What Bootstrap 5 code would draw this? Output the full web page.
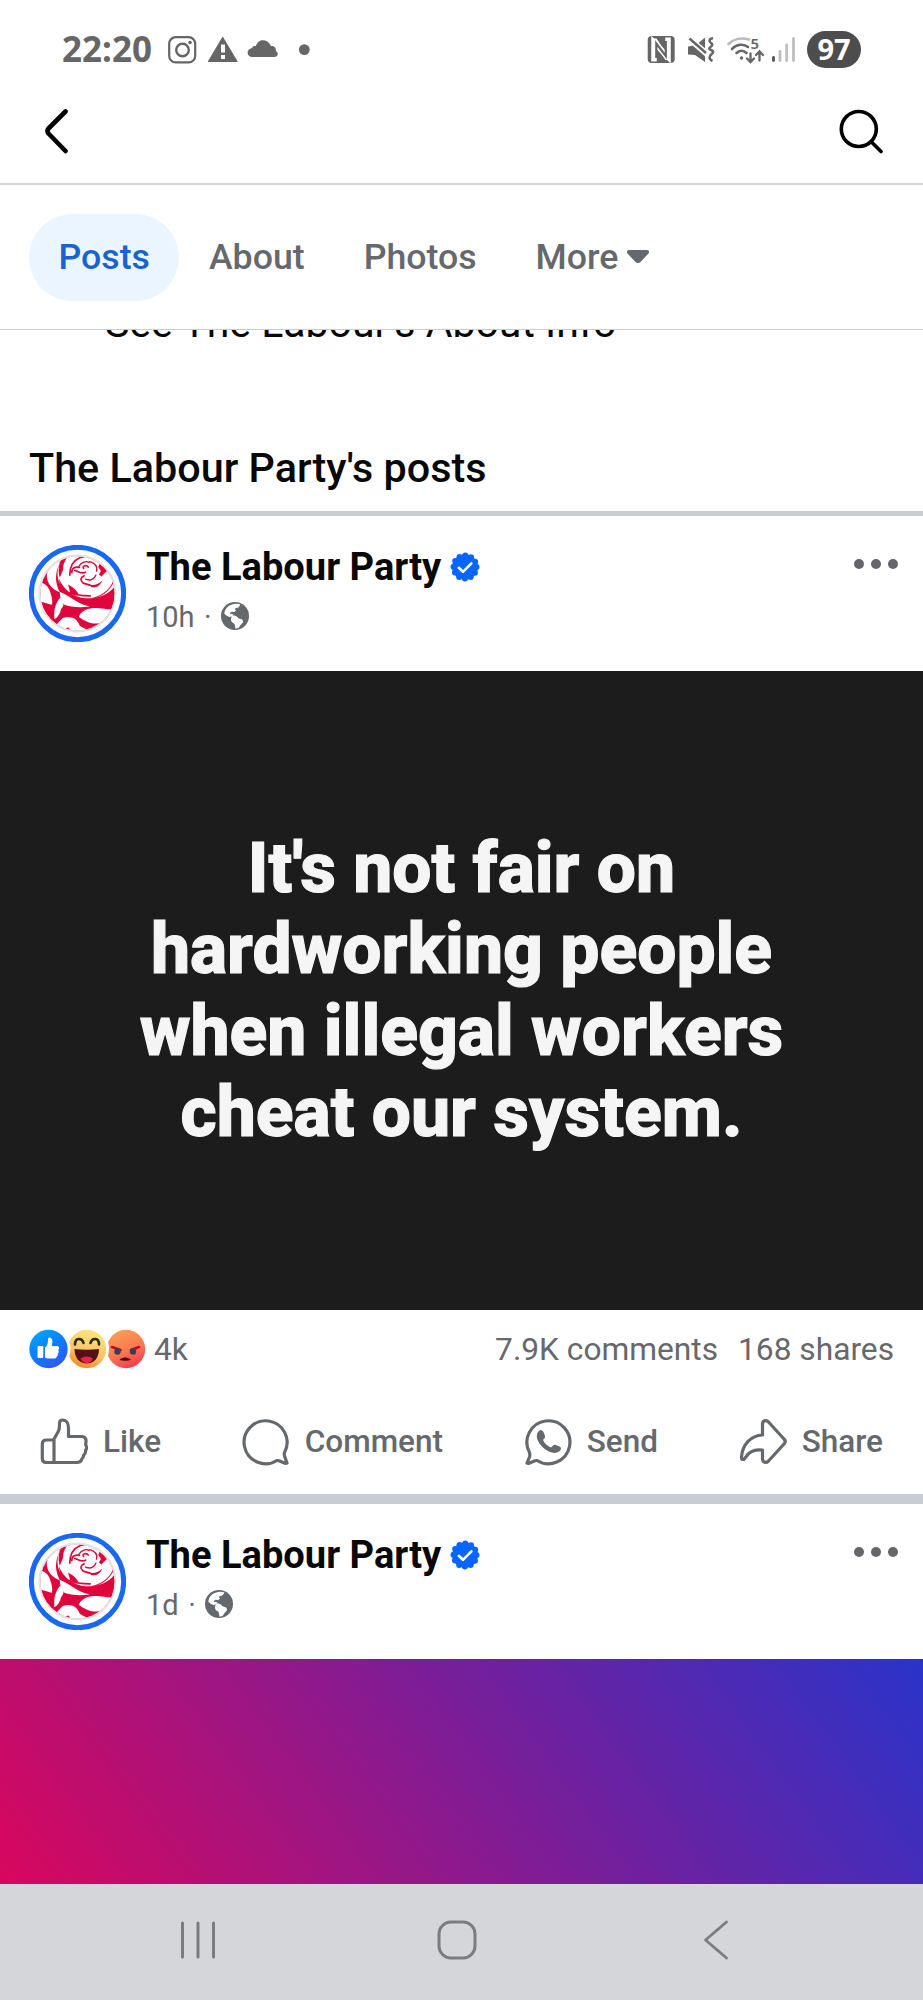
<!DOCTYPE html>
<html lang="en">

<head>
	<meta charset="utf-8">
	<meta name="viewport" content="width=device-width, initial-scale=1">
	<title>The Labour Party</title>
	<!-- Bootstrap CSS -->
	<link href="https://cdn.jsdelivr.net/npm/bootstrap@5.3.3/dist/css/bootstrap.min.css" rel="stylesheet">

	<style>
		body {
			font-family: Roboto, "Noto Sans", sans-serif;
			color: #080809;
			background-color: #fff;
			overflow: hidden;
		}

		svg {
			display: block;
			flex: none;
		}

		.screen {
			width: 923px;
			height: 2000px;
			white-space: nowrap;
		}

		/* Phone status bar */
		.status-bar {
			height: 79px;
			padding: 20px 62px 0 62px;
			font-family: "Noto Sans", sans-serif;
			color: #666;
		}

		.clock {
			font-size: 35px;
			font-weight: 700;
			line-height: 38px;
			width: 106px;
			height: 40px;
		}

		.battery {
			width: 54px;
			height: 37px;
			font-size: 29px;
			font-weight: 700;
			line-height: 36px;
			background-color: #4d4d4d;
		}

		/* Top bar and tabs */
		.top-bar {
			height: 106px;
			padding: 0 40px 0 44px;
			border-bottom: 2px solid #d4d4d4;
		}

		.tab-bar {
			height: 145px;
			padding-left: 29px;
			border-bottom: 1px solid #ccc;
		}

		.tab-bar .nav-link {
			height: 87px;
			padding: 0 29.5px;
			font-size: 35.7px;
			font-weight: 500;
			line-height: 87px;
			color: #65686c;
			border-radius: 44px;
		}

		.tab-bar .nav-link.active {
			color: #1763cf;
			background-color: #ebf5ff;
		}

		.about-peek {
			height: 95px;
			padding-left: 105px;
			font-size: 41px;
			line-height: 40px;
		}

		.about-peek div {
			margin-top: -27px;
		}

		.section-title {
			height: 86px;
			padding-left: 29px;
			font-size: 41.3px;
			font-weight: 500;
			line-height: 87px;
		}

		.divider {
			height: 5px;
			background-color: #c9ccd1;
		}

		.divider-lg {
			height: 10px;
			background-color: #c9ccd4;
		}

		/* Post */
		.post-head {
			height: 155px;
			padding: 29px 25px 0 29px;
		}

		.post-head .menu-dots {
			margin-top: 14px;
		}

		.page-name {
			font-size: 38.1px;
			font-weight: 700;
			line-height: 45px;
		}

		.page-name svg {
			margin-left: 9px;
			margin-top: -2px;
		}

		.post-meta {
			height: 54px;
			font-size: 29px;
			line-height: 54px;
			color: #65686c;
		}

		.post-meta span {
			padding: 0 9.500px;
		}

		.post-meta svg {
			margin-top: -2px;
		}

		.quote {
			height: 639px;
			font-size: 69.6px;
			font-weight: 800;
			line-height: 81.2px;
			color: #f5f5f5;
			background-color: #1c1c1c;
			-webkit-text-stroke: 1.1px #f5f5f5;
		}

		.stats {
			height: 79px;
			padding: 0 29px 0 29px;
			font-size: 31.7px;
			color: #65686c;
		}

		.actions {
			height: 105px;
			padding: 0 40px;
			font-size: 31.5px;
			font-weight: 500;
			color: #65686c;
		}

		.actions > div {
			gap: 15px;
		}

		.actions span {
			padding-top: 1px;
		}

		.banner {
			height: 225px;
			background: linear-gradient(54deg, #d9075d 0%, #811c94 50%, #2a33c9 100%);
		}

		/* Android navigation */
		.system-nav {
			height: 116px;
			padding: 0 194px 4px 180px;
			background-color: #d5d6da;
		}

		.system-nav .home-key {
			margin-right: 6px;
		}
	</style>
</head>

<body>
	<!-- Shared icons -->
	<svg width="0" height="0" class="position-absolute">
		<defs>
			<clipPath id="roseClip">
				<circle cx="172" cy="175" r="111" />
			</clipPath>
			<symbol id="rose" viewBox="27 30 290 290">
				<circle cx="172" cy="175" r="138" fill="#fff" stroke="#1868f2" stroke-width="15" />
				<g clip-path="url(#roseClip)">
					<rect x="50" y="50" width="250" height="250" fill="#e0053c" />
					<g fill="#fff">
						<path d="M124 56C96 84 76 106 81 130c4 20 18 34 38 41-12-23-15-45-6-72 5-14 9-25 11-43z" />
						<path d="M134 50C118 78 108 103 114 132c7 28 28 43 49 48 44 20 98 8 125-32 2-20-4-32-12-42-5-8-18-6-22-12-8-14-6-28-8-44z" />
						<path d="M50 142c24-2 38 14 42 34 4 12 6 24 3 33-16-5-28-11-45-8z" />
						<path d="M119 170c14 6 30 16 46 26 14 9 28 14 44 18-28 4-58 2-76-5-10-10-14-24-14-39z" />
						<path d="M120 188c12 8 14 24 3 33-3 14-9 24-20 31-2-22 0-44 17-64z" />
						<path d="M176 245c8-22 34-28 61-26 12 0 22 4 40 3-3 23-21 43-49 43-24-1-39-12-52-20z" />
						<path d="M90 292c14-20 28-34 38-44 26-8 44 4 50 22 8 10 26 10 30 20l-20 20H100z" />
						<path d="M50 218c16 4 28 16 46 40l-26 16-20-20z" />
					</g>
					<g fill="#e0053c">
						<path d="M126 66l14 2c-8 14-12 22-11 36l-10 24c-6-20-4-40 7-62z" />
						<path d="M116 128c8 20 18 34 34 44l-6-24c16 8 26 18 32 30-24 4-46-8-56-24z" />
						<path d="M242 78c12 8 22 18 24 28-10 2-14 10-22 18l-8-6 6-10-8-12z" />
						<path d="M206 148c14 4 28 0 40-12-6 16-18 22-32 20z" />
					</g>
					<g fill="none" stroke="#e0053c" stroke-width="5" stroke-linecap="round">
						<path d="M149 120c0-22 6-42 30-52l22-6" />
						<path d="M155 112c0-16 12-17 23-15M164 106c12 5 22 12 32 5" />
						<path d="M176 94c6-10 20-18 30-12M208 80c16 4 24 14 21 28" stroke-width="4" />
						<path d="M190 100c-5-10 10-10 14-4M192 122c-12 5-13 14-3 22l20 6" />
						<path d="M196 132c16 6 26 0 31-12" stroke-width="4" />
						<path d="M150 172c14 8 34 10 60 10" />
						<path d="M282 130c-6 28-30 52-66 60" stroke-width="3" />
					</g>
					<circle cx="143" cy="282" r="5" fill="#e0053c" />
				</g>
				<circle cx="172" cy="175" r="114" fill="none" stroke="#e2e2e2" stroke-width="5" />
			</symbol>
			<symbol id="verified" viewBox="-15 -15 30 30">
				<circle r="12.800" fill="#0866ff" />
				<!-- twelve round dashes make the scalloped rim -->
				<circle r="11.500" fill="none" stroke="#0866ff" stroke-width="6" stroke-linecap="round" stroke-dasharray="0 6.021" />
				<path d="M-6.200 .8l4.200 4L6.400-3.600" fill="none" stroke="#fff" stroke-width="2.600" stroke-linecap="round" stroke-linejoin="round" />
			</symbol>
			<symbol id="globe" viewBox="0 0 84 84">
				<circle cx="42" cy="42" r="42" fill="#65686c" />
				<path d="M58 7C46 3 32 5 22 13c-8 7-12 15-12 22 4 4 10 8 16 10l8-2 4-5-6-3-4 1-2-3 6-4 8 1 5-4-3-4 2-4 6-1c4-1 6-5 8-10z" fill="#fff" />
				<path d="M32 43c6-4 12-2 17 2l3 4 7 2c7 2 8 6 6 11l-7 8c-2 6-7 10-14 10-2-4-1-10-4-15-7-3-11-8-10-14z" fill="#fff" />
			</symbol>
			<symbol id="dots" viewBox="0 0 44 10">
				<g fill="#65676b">
					<circle cx="5" cy="5" r="5" />
					<circle cx="22" cy="5" r="5" />
					<circle cx="39" cy="5" r="5" />
				</g>
			</symbol>
			<linearGradient id="likeFill" x1="0" y1="0" x2=".6" y2="1">
				<stop offset="0" stop-color="#02adfc" />
				<stop offset=".5" stop-color="#0a82ff" />
				<stop offset="1" stop-color="#2b5cf6" />
			</linearGradient>
			<linearGradient id="hahaFill" x1=".7" y1="0" x2=".4" y2="1">
				<stop offset="0" stop-color="#ffe680" />
				<stop offset=".6" stop-color="#fbc465" />
				<stop offset="1" stop-color="#f68628" />
			</linearGradient>
			<linearGradient id="angryFill" x1=".3" y1="0" x2=".7" y2="1">
				<stop offset="0" stop-color="#f9a052" />
				<stop offset=".55" stop-color="#f97850" />
				<stop offset="1" stop-color="#fa3450" />
			</linearGradient>
		</defs>
	</svg>

	<div class="screen d-flex flex-column overflow-hidden">
		<!-- Status bar -->
		<div class="status-bar d-flex align-items-center justify-content-between">
			<div class="d-flex align-items-center">
				<div class="clock">22:20</div>
				<svg width="145" height="30" viewBox="168 35 145 30" fill="#666">
					<rect x="169.200" y="37.200" width="26" height="25.200" rx="6.500" fill="none" stroke="#666" stroke-width="2.200" />
					<circle cx="182.500" cy="50" r="6.300" fill="none" stroke="#666" stroke-width="2.400" />
					<circle cx="190" cy="42.500" r="1.800" />
					<path d="M222.700 37.500L237 61.500H208.500z" stroke="#666" stroke-width="1.200" stroke-linejoin="round" />
					<path d="M221 44.500h4v8h-4zM221 55h4v4h-4z" fill="#fff" />
					<path d="M253 57c-7 0-7-8-1-9 1-2 2-2 4-2 2-7 11-8 15 0 4 0 5 2 5 5 3 2 2 6-2 6z" />
					<circle cx="304.300" cy="49.600" r="5.400" />
				</svg>
			</div>
			<div class="d-flex align-items-center">
				<svg width="160" height="40" viewBox="646 30 160 40" fill="#666">
					<rect x="646.700" y="36" width="27" height="27" rx="4" />
					<path d="M653 61.500V42.500l14 14.500V37.500" fill="none" stroke="#fff" stroke-width="5.500" />
					<path d="M651 38.500h4.500l12 17.500V60h-3L653 44v17h-2z" fill="#fff" />
					<path d="M655.300 58V43.500l9.500 12.500V41" fill="none" stroke="#666" stroke-width="2.200" />
					<path d="M687 46.500l8-1.500 9-7.500V62l-10-7-7-.5z" />
					<path d="M688 38.500L706 54" stroke="#fff" stroke-width="6" />
					<path d="M688.500 38.500L705 53" stroke="#666" stroke-width="2.500" />
					<path d="M712 38c-6 2-3 4-1 6s-6 4-1 6 0 4-1 6 0 4 2.500 5" fill="none" stroke="#666" stroke-width="2.500" />
					<g fill="none" stroke-width="2.600" stroke-linecap="round">
						<path d="M727.500 44c5-5 13-6.500 20.500-4.500" stroke="#bbb" />
						<path d="M731 49c4.500-5 11.500-5.500 16-2M735.500 53c3-3 7-3 10 0" stroke="#666" />
						<path d="M749.500 53.500v8M746 58.500l3.500 3.500 3.500-3.500M758.500 60.500v-8M755 55l3.500-3.500 3.500 3.500" stroke="#666" stroke-width="2.300" />
					</g>
					<circle cx="740.500" cy="58" r="1.700" />
					<text x="749.500" y="48.500" font-size="15" font-weight="600">5</text>
					<path d="M772.500 57.500v3" stroke="#555" stroke-width="2.800" stroke-linecap="round" />
					<path d="M779 51.500v9M785.700 45v15.500M792.500 38.500v22" stroke="#bebebe" stroke-width="2.800" stroke-linecap="round" />
				</svg>
				<div class="battery rounded-pill text-white text-center">97</div>
			</div>
		</div>

		<!-- Top bar -->
		<div class="top-bar d-flex align-items-center justify-content-between">
			<svg width="26" height="46" viewBox="44 108 26 46">
				<path d="M65.500 111.500L48.500 128.500q-2 2.500 0 5L65.500 151" fill="none" stroke="#000" stroke-width="4.600" stroke-linecap="round" stroke-linejoin="round" />
			</svg>
			<svg width="44" height="46" viewBox="838 108 44 46" fill="none" stroke="#000" stroke-width="3.600" stroke-linecap="round">
				<circle cx="857.800" cy="129" r="17.500" />
				<path d="M871 142.500l9 9" />
			</svg>
		</div>

		<!-- Tabs -->
		<nav class="tab-bar nav align-items-center">
			<a class="nav-link active" href="#">Posts</a>
			<a class="nav-link" href="#">About</a>
			<a class="nav-link" href="#">Photos</a>
			<a class="nav-link d-flex align-items-center" href="#">More
				<svg class="ms-2" width="24" height="16" viewBox="0 0 24 16">
					<path d="M3 1h18c2 0 2.500 2 1.500 3.500L14.500 13c-1.500 1.500-3.500 1.500-5 0L1.500 4.500C.5 3 1 1 3 1z" fill="#65686c" />
				</svg>
			</a>
		</nav>

		<div class="about-peek overflow-hidden">
			<div>See The Labour's About Info</div>
		</div>

		<div class="section-title">The Labour Party's posts</div>
		<div class="divider"></div>

		<!-- First post -->
		<div class="post-head d-flex">
			<svg width="97" height="97"><use href="#rose" /></svg>
			<div class="flex-grow-1 ps-3 ms-1">
				<div class="page-name d-flex align-items-center">The Labour Party
					<svg width="30" height="30"><use href="#verified" /></svg>
				</div>
				<div class="post-meta d-flex align-items-center">10h<span>·</span><svg width="28" height="28"><use href="#globe" /></svg></div>
			</div>
			<svg class="menu-dots" width="44" height="10"><use href="#dots" /></svg>
		</div>

		<div class="quote d-flex align-items-center justify-content-center text-center">
			<div>It's not fair on<br>hardworking people<br>when illegal workers<br>cheat our system.</div>
		</div>

		<div class="stats d-flex align-items-center justify-content-between">
			<div class="d-flex align-items-center">
				<svg width="125" height="40" viewBox="29 1329 125 40">
					<circle cx="126" cy="1349" r="19.200" fill="url(#angryFill)" />
					<path d="M112 1347l8.500 3M131 1350l8-3" stroke="#bc0b26" stroke-width="2.500" stroke-linecap="round" />
					<circle cx="117.500" cy="1351.500" r="3.200" fill="#34405a" />
					<circle cx="133" cy="1351.500" r="3.200" fill="#34405a" />
					<path d="M119.500 1360c2-3.500 9.500-3.500 11.500 0-3 1-8.500 1-11.500 0z" fill="#3f0c14" />
					<circle cx="87" cy="1349" r="22" fill="#fff" />
					<circle cx="87" cy="1349" r="19.200" fill="url(#hahaFill)" />
					<path d="M75 1344.500c0-7 7-7 8.500-1.500M90.500 1343c1.500-5.500 8.500-5.500 8.500 1.500" fill="none" stroke="#2b2a12" stroke-width="2.600" stroke-linecap="round" />
					<path d="M74.500 1349c8 1 16 1 24.500 0 0 9-5 14.500-12.200 14.500s-12.300-5.500-12.300-14.500z" fill="#541116" />
					<path d="M80.500 1359c2-3.500 10.500-3.500 12.500 0-3 5.500-9.500 5.500-12.500 0z" fill="#e8214e" />
					<circle cx="48.500" cy="1349" r="22" fill="#fff" />
					<circle cx="48.500" cy="1349" r="19.200" fill="url(#likeFill)" />
					<rect x="37.500" y="1346" width="5.800" height="12" rx="1.200" fill="#fff" />
					<path d="M45 1347.500c2-1.500 3-3.500 3-8.500 0-2.500 4.500-2 4.500 2.500l-.8 4.500h5c2.500 0 3 2.500 1.500 4 1 1.500.5 3-.5 3.500.5 1.500-.2 2.500-1 3-.2 1.500-1 2-2.700 2H47l-2-1z" fill="#fff" />
				</svg>
				<span>4k</span>
			</div>
			<div class="d-flex">
				<span class="me-3 pe-1">7.9K comments</span>
				<span>168 shares</span>
			</div>
		</div>

		<div class="actions d-flex align-items-center justify-content-between">
			<div class="d-flex align-items-center">
				<svg width="48" height="48" viewBox="0 0 48 48" fill="none" stroke="#65686c" stroke-width="3.200" stroke-linejoin="round">
					<path d="M14 44.500H6q-3.700 0-3.700-3.700V26q0-4 4-4H13.500l4.500-8q1.500-2.500 1.500-6.500V5q.2-3 3-3c4 0 6 3.500 6 8V18.500h13.500q4.500.5 4 5.500-.5 2 0 3.500 1.500 2.500-.5 5 .5 3-2 5 0 2.500-2 4-.5 3-5 3z" />
					<path d="M14 22v22.500" />
				</svg>
				<span>Like</span>
			</div>
			<div class="d-flex align-items-center">
				<svg width="48" height="48" viewBox="0 0 48 48" fill="none" stroke="#65686c" stroke-width="3.200" stroke-linejoin="round">
					<path d="M35 42.500A21.500 21.500 0 1 1 42.500 34.500q-.5 2 .2 4l2.300 6.500q-1 .5-2 .2l-6-2.400q-1-.4-2-.3z" />
				</svg>
				<span>Comment</span>
			</div>
			<div class="d-flex align-items-center">
				<svg width="48" height="48" viewBox="0 0 48 48" fill="none" stroke="#65686c" stroke-width="3.200" stroke-linejoin="round">
					<path d="M13 42.500A21.500 21.500 0 1 0 5.500 34.500q.5 2 .2 4L3 45q1 .5 2 .2l6-2.400q1-.4 2-.3z" />
					<path d="M14 14c1.500-2.500 4.500-2 5.500 0l1.500 4c.6 2-1.500 3-2 4 2 4 4.500 6 8 7.500 1.500-1 2.500-3.500 5-2.500l4 1.800c2 1.500.5 4-1.200 5-3 1.600-6 1.400-9.300 0-5.500-2.400-10-7-12-12-1-3-1-5.800.5-7.800z" fill="#65686c" stroke="none" />
				</svg>
				<span>Send</span>
			</div>
			<div class="d-flex align-items-center">
				<svg width="48" height="48" viewBox="0 0 48 48" fill="none" stroke="#65686c" stroke-width="3.200" stroke-linejoin="round">
					<path d="M23.500 17V6.500c0-4 3.500-5 6-2.500l15.500 17q2.500 2.500 0 5L29.500 43c-2.500 2.500-6 1.500-6-2.500V32c-8-1-14 2-17 7.500C4.500 42.500 2.200 42 2.500 39 3.500 26 12 17.500 23.500 17z" />
				</svg>
				<span>Share</span>
			</div>
		</div>
		<div class="divider-lg"></div>

		<!-- Second post -->
		<div class="post-head d-flex">
			<svg width="97" height="97"><use href="#rose" /></svg>
			<div class="flex-grow-1 ps-3 ms-1">
				<div class="page-name d-flex align-items-center">The Labour Party
					<svg width="30" height="30"><use href="#verified" /></svg>
				</div>
				<div class="post-meta d-flex align-items-center">1d<span>·</span><svg width="28" height="28"><use href="#globe" /></svg></div>
			</div>
			<svg class="menu-dots" width="44" height="10"><use href="#dots" /></svg>
		</div>
		<div class="banner"></div>

		<!-- System navigation -->
		<div class="system-nav d-flex align-items-center justify-content-between">
			<svg width="36" height="40" viewBox="0 0 36 40" stroke="#7b7c80" stroke-width="3" stroke-linecap="round">
				<path d="M2.500 3v34M18 3v34M33.500 3v34" />
			</svg>
			<svg class="home-key" width="40" height="40" viewBox="0 0 40 40" fill="none" stroke="#7b7c80" stroke-width="3">
				<rect x="2" y="2" width="36" height="36" rx="12" />
			</svg>
			<svg width="26" height="40" viewBox="0 0 26 40" fill="none" stroke="#7b7c80" stroke-width="2.800" stroke-linecap="round" stroke-linejoin="round">
				<path d="M23.500 2L2.500 20l21 18" />
			</svg>
		</div>
	</div>

	<!-- Bootstrap JS -->
	<script src="https://cdn.jsdelivr.net/npm/bootstrap@5.3.3/dist/js/bootstrap.bundle.min.js"></script>
</body>

</html>
